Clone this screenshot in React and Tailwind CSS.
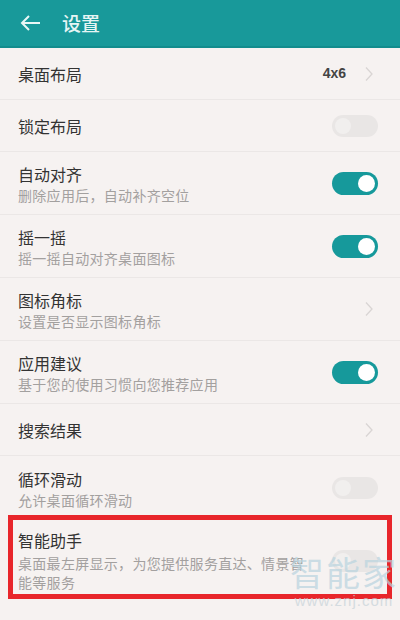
import React from 'react';

const font = { fontFamily: '"Noto Sans CJK SC", "Noto Sans", sans-serif' };

function Toggle({ on }) {
  if (on) {
    return (
      <div className="flex h-[23px] w-[46px] shrink-0 items-center justify-end rounded-full bg-[#16999b] pr-[3px]">
        <div className="h-[17px] w-[17px] rounded-full bg-white" />
      </div>
    );
  }
  return (
    <div className="flex h-[22px] w-[46px] shrink-0 items-center rounded-full bg-[#e9e6e5] pl-[3px]">
      <div className="h-[16px] w-[16px] rounded-full bg-[#f1efee]" />
    </div>
  );
}

function Chevron() {
  return (
    <svg width="10" height="16" viewBox="0 0 10 16" className="mr-[4px] shrink-0">
      <path d="M2 1.5 L8 8 L2 14.5" fill="none" stroke="#d9d5d4" strokeWidth="1.3" />
    </svg>
  );
}

function Row({ title, sub, right, divider = true }) {
  return (
    <div className={'flex items-center justify-between pl-[18px] pr-[22px] ' + (sub ? 'h-[63px] ' : 'h-[52px] ') + (divider ? 'border-b border-[#ebe7e6]' : '')}>
      <div className={sub ? 'pt-[2px]' : ''}>
        <div className="text-[16px] leading-[22px] text-[#333]">{title}</div>
        {sub && <div className="text-[14px] leading-[20px] tracking-[0.3px] text-[#a3a09f]">{sub}</div>}
      </div>
      {right}
    </div>
  );
}

export default function App() {
  return (
    <div className="relative h-[620px] w-[400px] overflow-hidden bg-[#f6f2f1]" style={font}>
      <header className="flex h-[48px] items-center border-b-2 border-[#128c8d] bg-[#18999a]">
        <svg width="22" height="18" viewBox="0 0 22 18" className="ml-[19px]">
          <path d="M10 2 L3 9 L10 16 M3 9 H21" fill="none" stroke="#e8f7f6" strokeWidth="2" />
        </svg>
        <span className="ml-[21px] text-[19px] font-medium text-[#e6f5f4]">设置</span>
      </header>

      <Row
        title="桌面布局"
        right={
          <div className="flex items-center gap-[18px]">
            <span className="text-[14px] font-bold text-[#444]" style={{ fontFamily: '"Liberation Sans", sans-serif' }}>4x6</span>
            <Chevron />
          </div>
        }
      />
      <Row title="锁定布局" right={<Toggle on={false} />} />
      <Row title="自动对齐" sub="删除应用后，自动补齐空位" right={<Toggle on />} />
      <Row title="摇一摇" sub="摇一摇自动对齐桌面图标" right={<Toggle on />} />
      <Row title="图标角标" sub="设置是否显示图标角标" right={<Chevron />} />
      <Row title="应用建议" sub="基于您的使用习惯向您推荐应用" right={<Toggle on />} />
      <Row title="搜索结果" right={<Chevron />} />
      <Row title="循环滑动" sub="允许桌面循环滑动" right={<Toggle on={false} />} divider={false} />

      <div className="mx-[8px] mt-[-4px] flex items-center justify-between border-[5px] border-[#e8262b] pl-[5px] pr-[9px] pt-[9px] pb-[2px]">
        <div className="w-[292px]">
          <div className="text-[16px] leading-[22px] text-[#333]">智能助手</div>
          <div className="mt-[3px] text-[14px] leading-[19px] tracking-[0.3px] text-[#a3a09f]">
            桌面最左屏显示，为您提供服务直达、情景智能等服务
          </div>
        </div>
        <Toggle on={false} />
      </div>

      <div className="pointer-events-none absolute left-[290px] top-[552px] flex flex-col items-center opacity-70">
        <span className="text-[34px] leading-[40px] tracking-[2px] text-[#b9d4df]">智能家</span>
        <span className="text-[15px] leading-[18px] tracking-[1px] text-[#c7d3d9]" style={{ fontFamily: '"Liberation Sans", sans-serif' }}>www.znj.com</span>
      </div>
    </div>
  );
}
